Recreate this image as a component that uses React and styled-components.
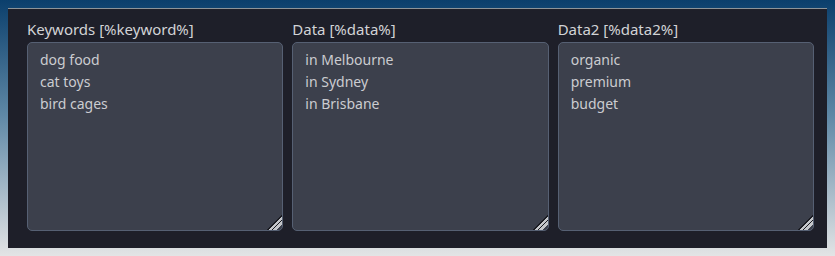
import React from 'react';
import styled, { createGlobalStyle } from 'styled-components';

const GlobalStyle = createGlobalStyle`
  html {
    min-height: 100%;
    background: linear-gradient(to bottom, #0b3f6c 0%, #5f88a6 45%, #e3e4e5 100%);
  }
  body {
    margin: 8px;
    font-family: 'Noto Sans', 'Open Sans', sans-serif;
  }
`;

const Panel = styled.div`
  display: grid;
  grid-template-columns: repeat(3, 1fr);
  gap: 9px;
  padding: 10px 13px 17px 19px;
  background-color: #1e1f29;
  border-top: 1px solid #8d9499;
`;

const Field = styled.div`
  display: flex;
  flex-direction: column;
  gap: 3px;
  min-width: 0;
`;

const Label = styled.label`
  font-size: 15px;
  line-height: 20px;
  color: #d2d3d6;
`;

const Area = styled.textarea`
  height: 189px;
  box-sizing: border-box;
  padding: 6px 12px 4px;
  border: 1px solid #566073;
  border-radius: 5px;
  background-color: #3c404c;
  color: #cbccd0;
  font-family: inherit;
  font-size: 14px;
  line-height: 22px;
  resize: vertical;
  outline: none;

  &::-webkit-resizer {
    background: linear-gradient(
      135deg,
      transparent 0 50%,
      #1b1c22 50% 54%,
      #c4c6ca 54% 64%,
      #1b1c22 64% 70%,
      #c4c6ca 70% 82%,
      transparent 82%
    );
  }
`;

const fields = [
  { label: 'Keywords [%keyword%]', value: 'dog food\ncat toys\nbird cages' },
  { label: 'Data [%data%]', value: 'in Melbourne\nin Sydney\nin Brisbane' },
  { label: 'Data2 [%data2%]', value: 'organic\npremium\nbudget' },
];

const App = () => {
  return (
    <>
      <GlobalStyle />
      <Panel>
        {fields.map((f) => (
          <Field key={f.label}>
            <Label>{f.label}</Label>
            <Area defaultValue={f.value} spellCheck={false} />
          </Field>
        ))}
      </Panel>
    </>
  );
};

export default App;
